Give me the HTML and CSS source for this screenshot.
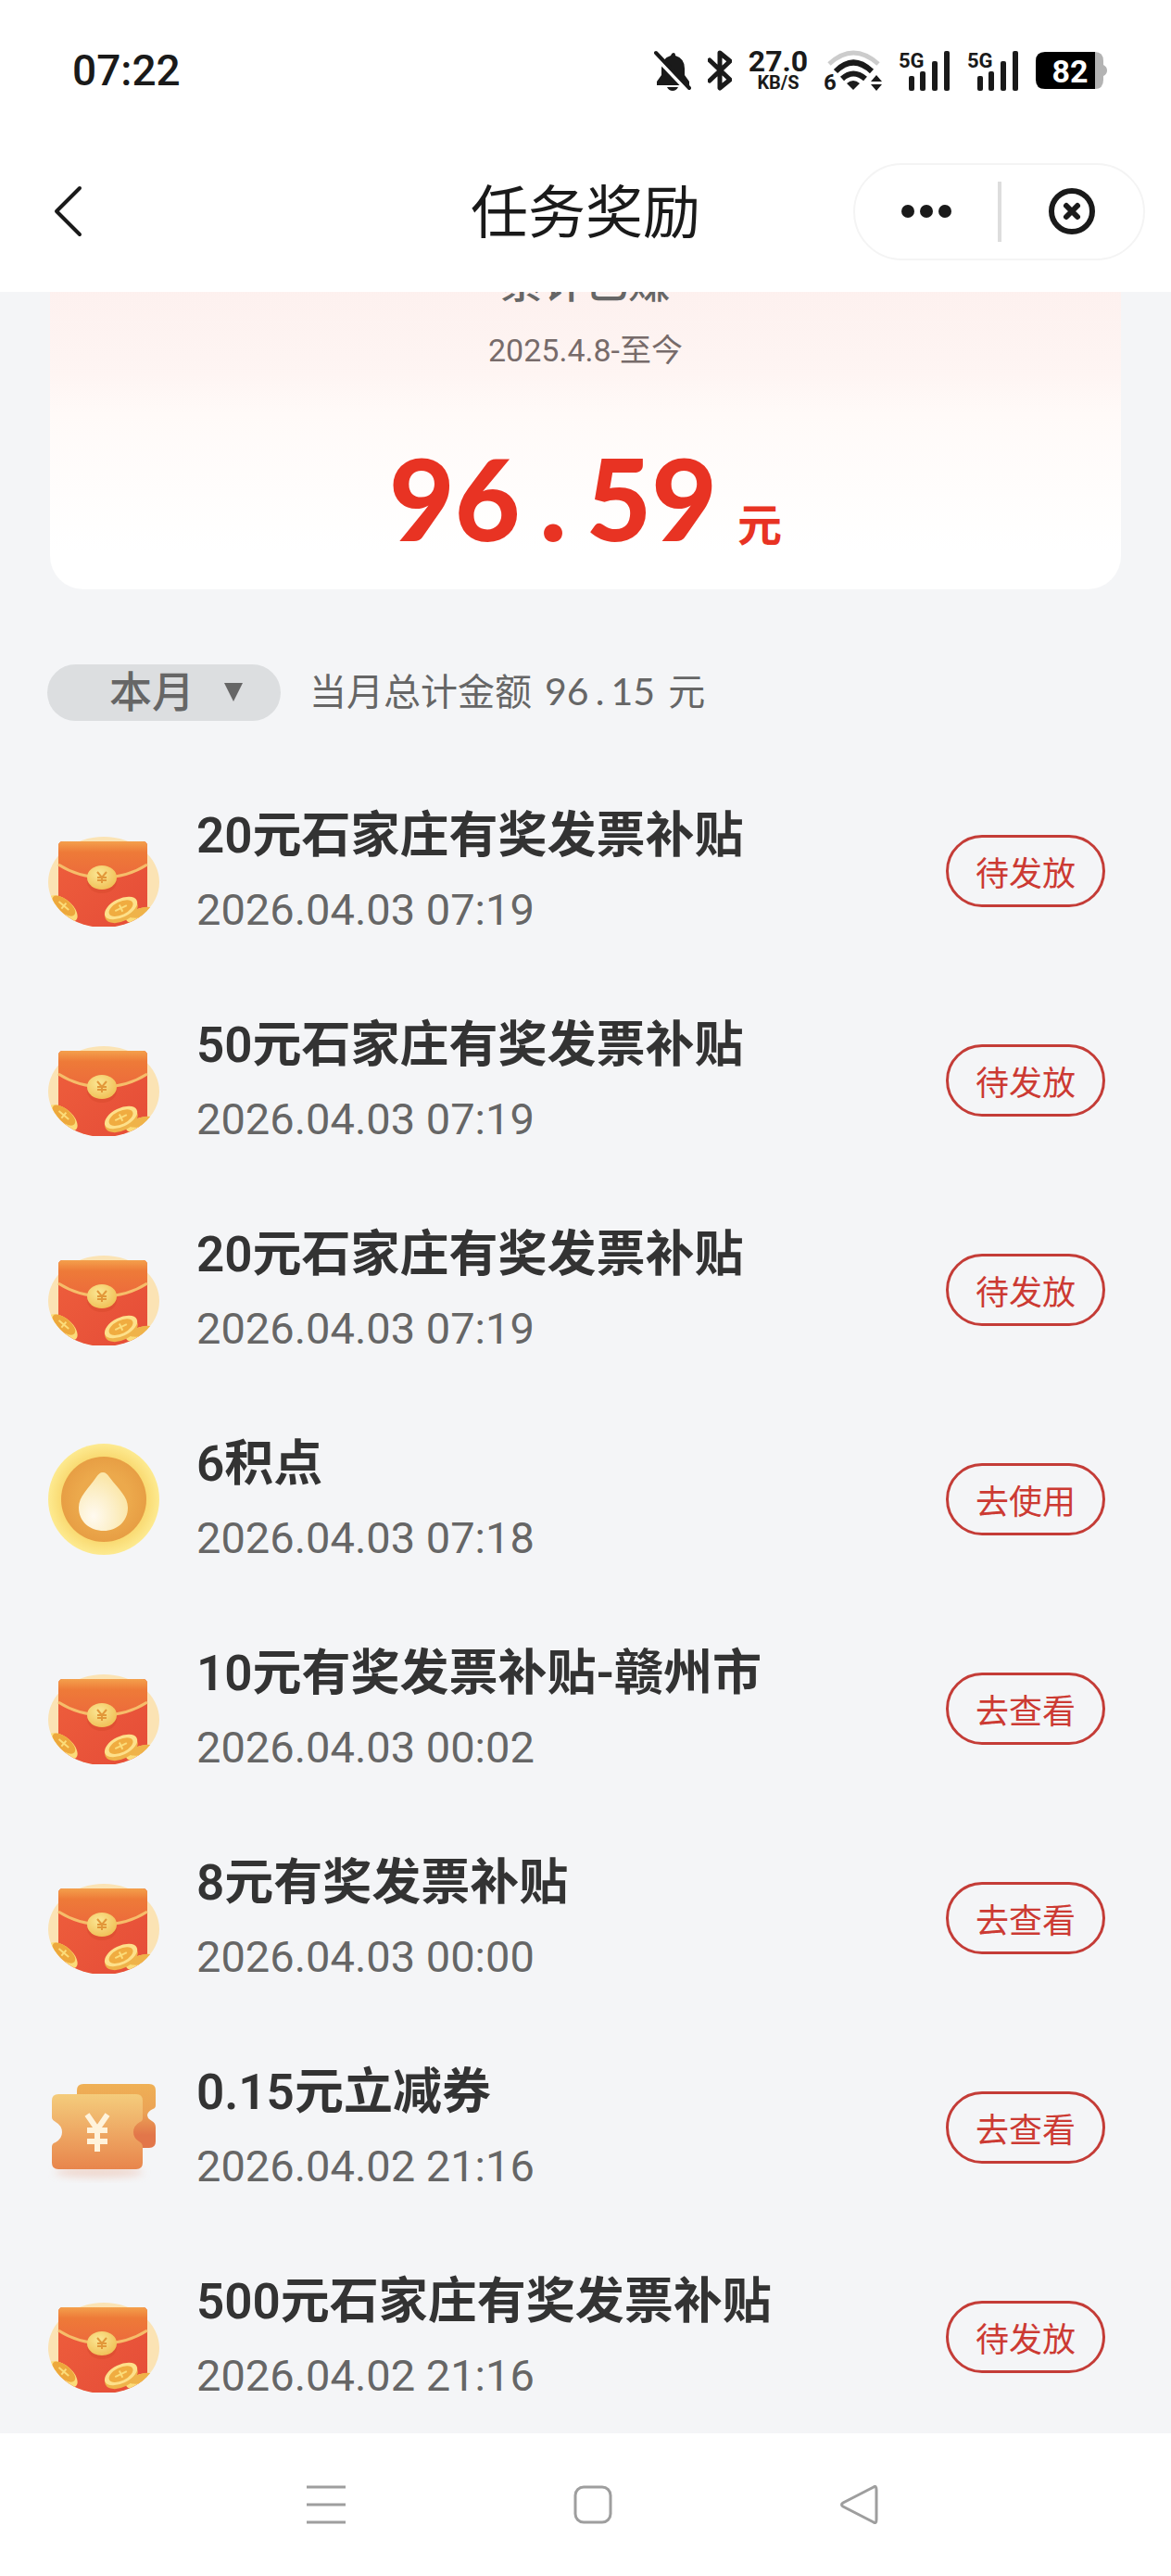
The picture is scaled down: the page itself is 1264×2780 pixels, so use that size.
FILE: index.html
```html
<!DOCTYPE html>
<html lang="zh-CN">
<head>
    <meta charset="UTF-8">
    <meta name="viewport" content="width=device-width, initial-scale=1.0">
    <title>任务奖励</title>
    <link rel="stylesheet" href="styles.css">
</head>
<body>
    <!-- shared icons -->
    <svg class="sprite" aria-hidden="true">
        <defs>
            <linearGradient id="gradFlap" x1="0" y1="0" x2="0" y2="1">
                <stop offset="0" stop-color="#f4a04c"/>
                <stop offset="0.3" stop-color="#ee7a38"/>
                <stop offset="1" stop-color="#ec6a3c"/>
            </linearGradient>
            <linearGradient id="gradBody" x1="0" y1="0" x2="1" y2="1">
                <stop offset="0" stop-color="#ee5f3c"/>
                <stop offset="1" stop-color="#e54c38"/>
            </linearGradient>
            <radialGradient id="gradCoin" cx="0.4" cy="0.35" r="0.7">
                <stop offset="0" stop-color="#fbe794"/>
                <stop offset="1" stop-color="#f0bf55"/>
            </radialGradient>
            <radialGradient id="gradRim" cx="0.5" cy="0.5" r="0.5">
                <stop offset="0.75" stop-color="#f9d970"/>
                <stop offset="1" stop-color="#fdea90"/>
            </radialGradient>
            <radialGradient id="gradInner" cx="0.5" cy="0.5" r="0.5">
                <stop offset="0.6" stop-color="#eca94c"/>
                <stop offset="1" stop-color="#e79e44"/>
            </radialGradient>
            <radialGradient id="gradDrop" cx="0.3" cy="0.75" r="0.7">
                <stop offset="0" stop-color="#fffaf0"/>
                <stop offset="0.6" stop-color="#fcefc8"/>
                <stop offset="1" stop-color="#fbe7ab"/>
            </radialGradient>
            <linearGradient id="gradTicket" x1="0" y1="0" x2="0" y2="1">
                <stop offset="0" stop-color="#f4cc7c"/>
                <stop offset="1" stop-color="#e8854c"/>
            </linearGradient>
            <linearGradient id="gradTicketBack" x1="0" y1="0" x2="0" y2="1">
                <stop offset="0" stop-color="#efb055"/>
                <stop offset="0.45" stop-color="#eba256"/>
                <stop offset="0.8" stop-color="#e2764a"/>
            </linearGradient>
            <clipPath id="clipPacket">
                <path d="M0 0H120V72A60 49 0 0 1 0 72Z"/>
            </clipPath>
            <filter id="soft" x="-20%" y="-50%" width="140%" height="200%">
                <feGaussianBlur stdDeviation="4"/>
            </filter>
        </defs>
        <symbol id="icon-packet" viewBox="0 0 120 120">
            <ellipse cx="60" cy="72" rx="60" ry="49" fill="#fbe3b4"/>
            <g clip-path="url(#clipPacket)">
                <path d="M16 28H102Q107 28 107 33V121H11V33Q11 28 16 28Z" fill="url(#gradBody)"/>
                <path d="M16 28H102Q107 28 107 33V52Q85 67 59 67Q33 67 11 52V33Q11 28 16 28Z" fill="url(#gradFlap)"/>
                <path d="M11 53Q33 67 59 67Q85 67 107 53" fill="none" stroke="#f6bd6a" stroke-width="3"/>
                <ellipse cx="58" cy="71" rx="16" ry="13" fill="#d84a2c" opacity="0.5"/>
                <g transform="rotate(40 17 99)">
                    <ellipse cx="17" cy="101" rx="19" ry="10" fill="#fbdc7a"/>
                    <ellipse cx="16" cy="98" rx="15" ry="7" fill="#eda83c"/>
                    <path d="M9 98H23M16 94V102" stroke="#fbdc7a" stroke-width="2"/>
                </g>
                <g transform="rotate(-14 100 106)">
                    <ellipse cx="100" cy="108" rx="17" ry="8" fill="#fbdc7a"/>
                    <ellipse cx="101" cy="105" rx="14" ry="5" fill="#efb34a"/>
                </g>
                <g transform="rotate(-26 79 101)">
                    <ellipse cx="78" cy="103" rx="19" ry="11" fill="#efb34a"/>
                    <ellipse cx="79" cy="100" rx="19" ry="10" fill="#fde08a"/>
                    <ellipse cx="79" cy="100" rx="14" ry="7" fill="#f0ac40"/>
                    <path d="M72 100H86M79 96V104" stroke="#fbdc7a" stroke-width="2"/>
                </g>
            </g>
            <ellipse cx="58" cy="67" rx="16" ry="13" fill="url(#gradCoin)"/>
            <path d="M53 61L58 67L63 61M58 67V73M53 67H63M53 70H63" fill="none" stroke="#e2983a" stroke-width="2"/>
        </symbol>
        <symbol id="icon-point" viewBox="0 0 120 120">
            <circle cx="60" cy="60" r="60" fill="url(#gradRim)"/>
            <circle cx="60" cy="60" r="46" fill="url(#gradInner)"/>
            <path d="M59 31C62 31 64 33 66 36C76 49 86 57 86 69C86 84 74 94 60 94C45 94 33 84 33 69C33 57 43 49 52 36C54 33 56 31 59 31Z" fill="url(#gradDrop)"/>
        </symbol>
        <symbol id="icon-ticket" viewBox="0 0 120 120">
            <ellipse cx="55" cy="108" rx="48" ry="6" fill="#eab9a4" opacity="0.5" filter="url(#soft)"/>
            <path d="M38 13H109Q116 13 116 20V36Q116 39 113 40Q107 43 107 47Q107 50 112 53Q116 55 116 60V75Q116 82 109 82H31V20Q31 13 38 13Z" fill="url(#gradTicketBack)"/>
            <path d="M11 24H95Q102 24 102 31V50Q102 53 99 54Q92 58 92 65Q92 71 98 75Q102 77 102 81V98Q102 105 95 105H11Q4 105 4 98V81Q4 77 8 76Q15 72 15 65Q15 58 8 54Q4 52 4 49V31Q4 24 11 24Z" fill="url(#gradTicket)"/>
            <path d="M42 46L53 62L64 46M53 62V86M42 63H64M42 75H64" fill="none" stroke="#fff3dc" stroke-width="6"/>
        </symbol>
        <symbol id="icon-signal" viewBox="0 0 56 44">
            <rect x="11" y="28" width="6" height="16" rx="2"/>
            <rect x="23" y="23" width="6" height="21" rx="2"/>
            <rect x="36" y="12" width="6" height="32" rx="2"/>
            <rect x="49" y="1" width="6" height="43" rx="2"/>
        </symbol>
    </svg>

    <header class="header">
        <div class="status-bar">
            <span class="status-time">07:22</span>
            <div class="status-icons">
                <svg width="40" height="44" viewBox="0 0 40 44">
                    <path d="M21 3Q23 3 23 6Q33 9 33 20V27L38 34V38H3V34L8 27V20Q8 9 18 6Q19 3 21 3Z"/>
                    <path d="M14 40H26Q24 44 20 44T14 40Z"/>
                    <path d="M0 6L37 45" stroke="#fff" stroke-width="4"/>
                    <path d="M2 3L38 41" stroke="#1a1a1a" stroke-width="4" stroke-linecap="round"/>
                </svg>
                <svg width="26" height="44" viewBox="0 0 26 44">
                    <path d="M2 11L24 32L13 41V3L24 12L2 33" fill="none" stroke="#1a1a1a" stroke-width="5" stroke-linejoin="round" stroke-linecap="round"/>
                </svg>
                <div class="net-speed">
                    <span class="net-value">27.0</span>
                    <span class="net-unit">KB/S</span>
                </div>
                <svg width="62" height="44" viewBox="0 0 62 44">
                    <path d="M5 15Q31 -9 58 15" fill="none" stroke="#ccc" stroke-width="5"/>
                    <path d="M12 23Q31 4 51 23" fill="none" stroke="#1a1a1a" stroke-width="6"/>
                    <path d="M19 31Q31 20 44 31" fill="none" stroke="#1a1a1a" stroke-width="6"/>
                    <path d="M24 36Q31 30 38 36L31 43Z"/>
                    <path d="M56 27L62 34H50ZM56 44L62 37H50Z"/>
                    <text x="-1" y="43" class="wifi-label">6</text>
                </svg>
                <svg width="56" height="44"><text x="0" y="19" class="signal-label">5G</text><use href="#icon-signal"/></svg>
                <svg width="56" height="44"><text x="0" y="19" class="signal-label">5G</text><use href="#icon-signal"/></svg>
                <svg width="78" height="44" viewBox="0 0 78 44">
                    <path d="M10 2H64Q73 2 73 12V16Q77 18 77 22Q77 26 73 28V32Q73 42 64 42H10Z" fill="#b3b3b3"/>
                    <path d="M10 2H64V42H10Q0 42 0 32V12Q0 2 10 2Z" fill="#000"/>
                    <text x="37" y="35" class="battery-label">82</text>
                </svg>
            </div>
        </div>
        <div class="title-bar">
            <button class="btn-back" aria-label="返回">
                <svg width="42" height="60" viewBox="0 0 42 60">
                    <path d="M34 5L9 30L34 55" fill="none" stroke="#1a1a1a" stroke-width="4" stroke-linecap="round" stroke-linejoin="round"/>
                </svg>
            </button>
            <h1>任务奖励</h1>
            <div class="capsule">
                <button aria-label="更多">
                    <svg width="56" height="16" viewBox="0 0 56 16">
                        <circle cx="8" cy="8" r="7"/><circle cx="28" cy="8" r="7"/><circle cx="48" cy="8" r="7"/>
                    </svg>
                </button>
                <span class="capsule-line"></span>
                <button aria-label="关闭">
                    <svg width="50" height="50" viewBox="0 0 50 50">
                        <circle cx="25" cy="25" r="22" fill="none" stroke="#1a1a1a" stroke-width="6"/>
                        <path d="M19 19L31 31M31 19L19 31" stroke="#1a1a1a" stroke-width="6" stroke-linecap="round"/>
                    </svg>
                </button>
            </div>
        </div>
    </header>

    <main class="content">
        <section class="total-card">
            <h2>累计已赚</h2>
            <p class="total-range">2025.4.8-至今</p>
            <p class="total-amount"><span class="num">96<span class="dot">.</span>59</span><span class="unit">元</span></p>
        </section>

        <div class="filter">
            <div class="month">
                <select aria-label="月份">
                    <option>本月</option>
                </select>
                <svg class="month-arrow" width="20" height="20" viewBox="0 0 20 20"><path d="M0 0H20L10 20Z"/></svg>
            </div>
            <p class="month-total">当月总计金额<span class="num">96<span class="dot">.</span>15</span>元</p>
        </div>

        <ul class="reward-list">
            <li class="reward">
                <svg class="reward-icon"><use href="#icon-packet"/></svg>
                <div class="reward-info">
                    <h3>20元石家庄有奖发票补贴</h3>
                    <time>2026.04.03 07:19</time>
                </div>
                <button class="btn-reward">待发放</button>
            </li>
            <li class="reward">
                <svg class="reward-icon"><use href="#icon-packet"/></svg>
                <div class="reward-info">
                    <h3>50元石家庄有奖发票补贴</h3>
                    <time>2026.04.03 07:19</time>
                </div>
                <button class="btn-reward">待发放</button>
            </li>
            <li class="reward">
                <svg class="reward-icon"><use href="#icon-packet"/></svg>
                <div class="reward-info">
                    <h3>20元石家庄有奖发票补贴</h3>
                    <time>2026.04.03 07:19</time>
                </div>
                <button class="btn-reward">待发放</button>
            </li>
            <li class="reward">
                <svg class="reward-icon"><use href="#icon-point"/></svg>
                <div class="reward-info">
                    <h3>6积点</h3>
                    <time>2026.04.03 07:18</time>
                </div>
                <button class="btn-reward">去使用</button>
            </li>
            <li class="reward">
                <svg class="reward-icon"><use href="#icon-packet"/></svg>
                <div class="reward-info">
                    <h3>10元有奖发票补贴-赣州市</h3>
                    <time>2026.04.03 00:02</time>
                </div>
                <button class="btn-reward">去查看</button>
            </li>
            <li class="reward">
                <svg class="reward-icon"><use href="#icon-packet"/></svg>
                <div class="reward-info">
                    <h3>8元有奖发票补贴</h3>
                    <time>2026.04.03 00:00</time>
                </div>
                <button class="btn-reward">去查看</button>
            </li>
            <li class="reward">
                <svg class="reward-icon"><use href="#icon-ticket"/></svg>
                <div class="reward-info">
                    <h3>0.15元立减券</h3>
                    <time>2026.04.02 21:16</time>
                </div>
                <button class="btn-reward">去查看</button>
            </li>
            <li class="reward">
                <svg class="reward-icon"><use href="#icon-packet"/></svg>
                <div class="reward-info">
                    <h3>500元石家庄有奖发票补贴</h3>
                    <time>2026.04.02 21:16</time>
                </div>
                <button class="btn-reward">待发放</button>
            </li>
        </ul>
    </main>

    <nav class="nav-bar">
        <button aria-label="最近任务">
            <svg width="42" height="42" viewBox="0 0 42 42"><path d="M0 2H42M0 21H42M0 40H42"/></svg>
        </button>
        <button aria-label="主屏幕">
            <svg width="42" height="42" viewBox="0 0 42 42"><rect x="2" y="2" width="38" height="38" rx="9"/></svg>
        </button>
        <button aria-label="返回上一级">
            <svg width="42" height="42" viewBox="0 0 42 42"><path d="M36 2Q39 0 39 5V37Q39 42 36 40L3 23Q0 21 3 19Z"/></svg>
        </button>
    </nav>
</body>
</html>
```

FILE: styles.css
```css
* {
    box-sizing: border-box;
}

body {
    margin: 0;
    height: 100vh;
    display: flex;
    flex-direction: column;
    background-color: #f4f5f7;
    color: #1a1a1a;
    font-family: Roboto, "Noto Sans CJK SC", sans-serif;
}

h1, h2, h3, p, ul {
    margin: 0;
    padding: 0;
}

button {
    padding: 0;
    border: none;
    background: none;
    font-family: inherit;
}

svg {
    display: block;
    fill: #1a1a1a;
}

.sprite {
    position: absolute;
    width: 0;
    height: 0;
}

/* status bar and title */
.header {
    position: relative;
    z-index: 1;
    flex: none;
    padding-bottom: 11px;
    background-color: #fff;
}

.status-bar {
    display: flex;
    justify-content: space-between;
    align-items: center;
    height: 152px;
    padding: 0 68px 0 78px;
}

.status-time {
    font-size: 46px;
    font-weight: 500;
}

.status-icons {
    display: flex;
    align-items: center;
    gap: 18px;
}

.net-speed {
    display: flex;
    flex-direction: column;
    align-items: center;
    width: 64px;
    font-weight: 700;
}

.net-value {
    font-size: 32px;
    line-height: 26px;
}

.net-unit {
    font-size: 20px;
    line-height: 20px;
}

.signal-label {
    font-size: 22px;
    font-weight: 700;
}

.wifi-label {
    font-size: 24px;
    font-weight: 700;
}

.battery-label {
    font-size: 34px;
    font-weight: 700;
    fill: #fff;
    text-anchor: middle;
}

.title-bar {
    display: grid;
    grid-template-columns: 1fr auto 1fr;
    align-items: center;
    height: 152px;
    padding: 0 28px;
}

.title-bar h1 {
    padding-top: 6px;
    font-size: 62px;
    font-weight: 400;
    line-height: 80px;
}

.btn-back {
    justify-self: start;
    padding-left: 24px;
}

.capsule {
    justify-self: end;
    display: flex;
    align-items: center;
    width: 315px;
    height: 105px;
    border: 2px solid #f4f4f4;
    border-radius: 53px;
}

.capsule button {
    flex: 1;
    display: flex;
    justify-content: center;
}

.capsule-line {
    width: 4px;
    height: 65px;
    background-color: #ddd;
}

/* content */
.content {
    flex: 1;
    min-height: 0;
    overflow: hidden;
    padding: 0 54px;
}

.total-card {
    margin-top: -100px;
    padding: 58px 0 39px;
    border-radius: 36px;
    background: linear-gradient(#fdf0ee 20%, #fef5f3 45%, #fffaf8 55%, #fff 90%);
    text-align: center;
}

.total-card h2 {
    font-size: 46px;
    font-weight: 500;
    line-height: 64px;
    color: #666;
}

.total-range {
    margin-top: 16px;
    font-size: 34px;
    line-height: 50px;
    color: #776b6a;
}

.num {
    font-family: Lato, sans-serif;
}

.dot {
    display: inline-block;
    text-align: center;
}

.total-amount {
    display: flex;
    justify-content: center;
    align-items: baseline;
    gap: 22px;
    margin-top: 74px;
    color: #e83323;
    font-weight: 500;
    line-height: 120px;
}

.total-amount .num {
    font-size: 122px;
    font-weight: 900;
}

.total-amount .dot {
    width: 71px;
}

.total-amount .unit {
    font-size: 48px;
    font-weight: 700;
    line-height: 48px;
}

.filter {
    display: flex;
    align-items: center;
    gap: 31px;
    margin: 80px 0 49px -3px;
    color: #666;
}

.month {
    position: relative;
}

.month select {
    display: block;
    appearance: none;
    width: 252px;
    height: 61px;
    padding: 0 0 0 67px;
    border: none;
    border-radius: 31px;
    background-color: #dcdee0;
    color: #666;
    font-family: inherit;
    font-size: 46px;
    font-weight: 500;
    line-height: 60px;
}

.month-arrow {
    position: absolute;
    top: 20px;
    right: 41px;
    fill: #666;
    pointer-events: none;
}

.month-total {
    font-size: 40px;
    line-height: 60px;
}

.month-total .num {
    margin: 0 14px;
    font-size: 41px;
}

.month-total .dot {
    width: 24px;
}

.reward-list {
    list-style: none;
}

.reward {
    display: flex;
    align-items: center;
    height: 226px;
    padding-right: 17px;
    margin-left: -2px;
}

.reward-icon {
    flex: none;
    width: 120px;
    height: 120px;
}

.reward-info {
    flex: 1;
    padding: 4px 0 0 40px;
}

.reward-info h3 {
    font-size: 53px;
    font-weight: 600;
    line-height: 80px;
    color: #333;
}

.reward-info time {
    display: block;
    font-size: 47px;
    line-height: 80px;
    color: #666;
}

.btn-reward {
    width: 172px;
    height: 78px;
    border: 3px solid #c43c37;
    border-radius: 39px;
    color: #cc3a33;
    font-size: 36px;
}

/* system navigation */
.nav-bar {
    flex: none;
    display: flex;
    justify-content: center;
    align-items: center;
    gap: 246px;
    height: 154px;
    padding-left: 16px;
    background-color: #fff;
}

.nav-bar svg {
    fill: none;
    stroke: #9e9e9e;
    stroke-width: 3;
}
```
